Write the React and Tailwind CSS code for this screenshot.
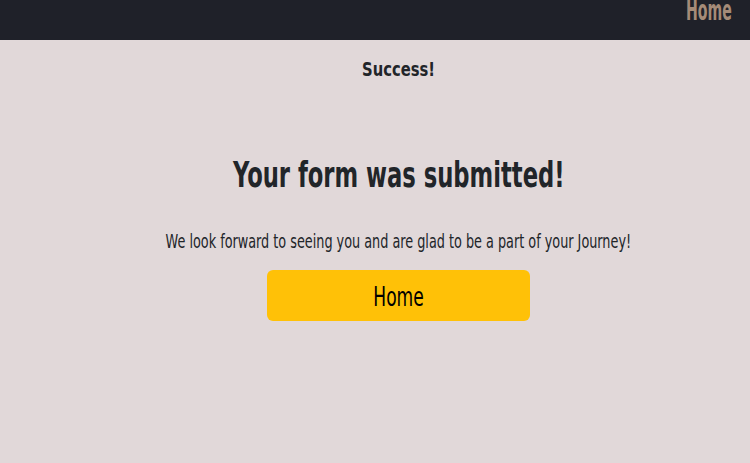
export default function App() {
  const font = { fontFamily: '"DejaVu Sans Condensed", "DejaVu Sans", sans-serif' };
  return (
    <div className="min-h-screen bg-[#e1d8d9] flex flex-col" style={font}>
      <header className="h-10 bg-[#1f2129] flex items-start justify-end pr-[18px]">
        <a href="#" className="text-[28px] leading-[22px] font-bold text-[#a58b78] scale-x-[0.56] origin-right">
          Home
        </a>
      </header>
      <main className="flex flex-col items-center pl-[47px] text-[#212529]">
        <h2 className="mt-[17px] text-[20px] leading-[24px] font-bold scale-x-[0.82]">Success!</h2>
        <h1 className="mt-[72px] text-[36px] leading-[44px] font-bold scale-x-[0.7]">Your form was submitted!</h1>
        <p className="mt-[32px] text-[19px] leading-[24px] scale-x-[0.75]">
          We look forward to seeing you and are glad to be a part of your Journey!
        </p>
        <button className="mt-[17px] w-[263px] h-[51px] rounded-[6px] bg-[#ffc107] text-black flex items-center justify-center pt-[3px]">
          <span className="text-[26px] leading-[26px] scale-x-[0.73]">Home</span>
        </button>
      </main>
    </div>
  );
}
